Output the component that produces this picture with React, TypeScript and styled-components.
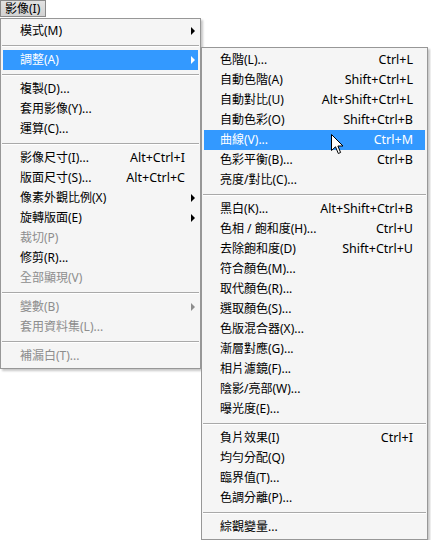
import React from "react";
import styled, { createGlobalStyle } from "styled-components";

const Global = createGlobalStyle`
  html, body { margin: 0; padding: 0; background: #ffffff; }
  body { font-family: "Noto Sans", "Noto Sans CJK TC", sans-serif; font-size: 12px; }
`;

type Entry =
  | { sep: true }
  | { sep?: false; label: string; shortcut?: string; sub?: boolean; disabled?: boolean; active?: boolean; cursor?: boolean };

const S: Entry = { sep: true };

const mainItems: Entry[] = [
  { label: "模式(M)", sub: true },
  S,
  { label: "調整(A)", sub: true, active: true },
  S,
  { label: "複製(D)..." },
  { label: "套用影像(Y)..." },
  { label: "運算(C)..." },
  S,
  { label: "影像尺寸(I)...", shortcut: "Alt+Ctrl+I" },
  { label: "版面尺寸(S)...", shortcut: "Alt+Ctrl+C" },
  { label: "像素外觀比例(X)", sub: true },
  { label: "旋轉版面(E)", sub: true },
  { label: "裁切(P)", disabled: true },
  { label: "修剪(R)..." },
  { label: "全部顯現(V)", disabled: true },
  S,
  { label: "變數(B)", sub: true, disabled: true },
  { label: "套用資料集(L)...", disabled: true },
  S,
  { label: "補漏白(T)...", disabled: true },
];

const subItems: Entry[] = [
  { label: "色階(L)...", shortcut: "Ctrl+L" },
  { label: "自動色階(A)", shortcut: "Shift+Ctrl+L" },
  { label: "自動對比(U)", shortcut: "Alt+Shift+Ctrl+L" },
  { label: "自動色彩(O)", shortcut: "Shift+Ctrl+B" },
  { label: "曲線(V)...", shortcut: "Ctrl+M", active: true, cursor: true },
  { label: "色彩平衡(B)...", shortcut: "Ctrl+B" },
  { label: "亮度/對比(C)..." },
  S,
  { label: "黑白(K)...", shortcut: "Alt+Shift+Ctrl+B" },
  { label: "色相 / 飽和度(H)...", shortcut: "Ctrl+U" },
  { label: "去除飽和度(D)", shortcut: "Shift+Ctrl+U" },
  { label: "符合顏色(M)..." },
  { label: "取代顏色(R)..." },
  { label: "選取顏色(S)..." },
  { label: "色版混合器(X)..." },
  { label: "漸層對應(G)..." },
  { label: "相片濾鏡(F)..." },
  { label: "陰影/亮部(W)..." },
  { label: "曝光度(E)..." },
  S,
  { label: "負片效果(I)", shortcut: "Ctrl+I" },
  { label: "均勻分配(Q)" },
  { label: "臨界值(T)..." },
  { label: "色調分離(P)..." },
  S,
  { label: "綜觀變量..." },
];

const Page = styled.div`
  display: flex;
  flex-direction: column;
  align-items: flex-start;
  width: 431px;
  height: 540px;
  overflow: hidden;
`;

const MenuBarButton = styled.div`
  box-sizing: border-box;
  height: 18px;
  padding: 0 5px 0 4px;
  display: flex;
  align-items: center;
  background: linear-gradient(#e2e2e2, #d2d2d2);
  border: 1px solid #8a8a8a;
  color: #000;
  font-size: 12px;
  line-height: 15px;
`;

const MenusRow = styled.div`
  display: flex;
  align-items: flex-start;
  margin-top: 1px;
`;

const Menu = styled.div<{ $width: number; $offset: number }>`
  box-sizing: border-box;
  width: ${(p) => p.$width}px;
  margin-top: ${(p) => p.$offset}px;
  padding: 2px;
  background: #f5f5f5;
  border: 1px solid #979797;
  box-shadow: 2px 2px 2px rgba(0, 0, 0, 0.22);
  display: flex;
  flex-direction: column;
  position: relative;
`;

const Row = styled.div<{ $active?: boolean; $disabled?: boolean; $padL: number; $padR: number }>`
  position: relative;
  height: 20px;
  display: grid;
  grid-template-columns: 1fr auto 10px;
  align-items: center;
  padding-left: ${(p) => p.$padL}px;
  padding-right: ${(p) => p.$padR}px;
  background: ${(p) => (p.$active ? "#3399ff" : "transparent")};
  color: ${(p) => (p.$active ? "#ffffff" : p.$disabled ? "#8d8d8d" : "#000000")};
  white-space: nowrap;
  line-height: 20px;
`;

const Label = styled.span`
  font-size: 12px;
`;

const Shortcut = styled.span`
  font-size: 12.5px;
  text-align: right;
`;

const ArrowCell = styled.span`
  display: flex;
  justify-content: flex-end;
  align-items: center;
`;

const Arrow = styled.span<{ $color: string }>`
  width: 0;
  height: 0;
  border-top: 4px solid transparent;
  border-bottom: 4px solid transparent;
  border-left: 4px solid ${(p) => p.$color};
`;

const Separator = styled.div`
  height: 9px;
  display: flex;
  flex-direction: column;
  justify-content: center;
  margin: 0 -1px;
  &::before {
    content: "";
    display: block;
    height: 1px;
    background: #a9a9a9;
  }
  &::after {
    content: "";
    display: block;
    height: 1px;
    background: #ffffff;
  }
`;

const Cursor = styled.svg`
  position: absolute;
  left: 127px;
  top: 4px;
`;

function PointerIcon() {
  return (
    <Cursor width="13" height="21" viewBox="0 0 13 21">
      <path
        d="M0.5 0.5 L0.5 16.5 L4.5 12.8 L7.3 19.5 L9.6 18.5 L6.9 12 L12 12 Z"
        fill="#ffffff"
        stroke="#000000"
        strokeWidth="1"
        strokeLinejoin="miter"
      />
    </Cursor>
  );
}

function MenuList({ items, padL, padR }: { items: Entry[]; padL: number; padR: number }) {
  return (
    <>
      {items.map((it, i) =>
        it.sep ? (
          <Separator key={i} />
        ) : (
          <Row key={i} $active={it.active} $disabled={it.disabled} $padL={padL} $padR={padR}>
            <Label>{it.label}</Label>
            <Shortcut>{it.shortcut ?? ""}</Shortcut>
            <ArrowCell>
              {it.sub ? (
                <Arrow $color={it.active ? "#ffffff" : it.disabled ? "#8d8d8d" : "#000000"} />
              ) : null}
            </ArrowCell>
            {it.cursor ? <PointerIcon /> : null}
          </Row>
        )
      )}
    </>
  );
}

export default function App() {
  return (
    <Page>
      <Global />
      <MenuBarButton>影像(I)</MenuBarButton>
      <MenusRow>
        <Menu $width={201} $offset={0}>
          <MenuList items={mainItems} padL={17} padR={3} />
        </Menu>
        <Menu $width={227} $offset={29}>
          <MenuList items={subItems} padL={16} padR={2} />
        </Menu>
      </MenusRow>
    </Page>
  );
}
